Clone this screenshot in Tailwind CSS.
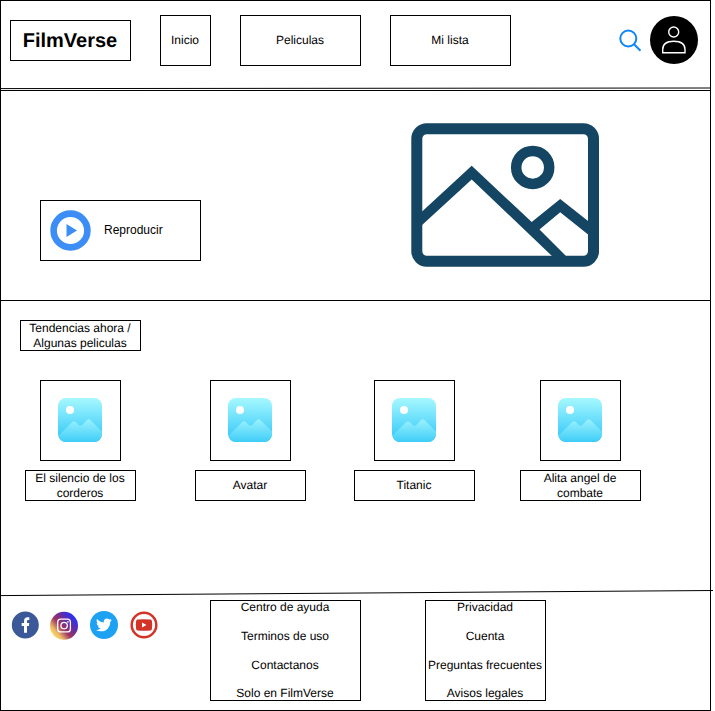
<!DOCTYPE html>
<html lang="es">
<head>
<meta charset="utf-8">
<title>FilmVerse</title>
<script src="https://cdn.jsdelivr.net/npm/@tailwindcss/browser@4"></script>
</head>
<body class="bg-white text-black overflow-hidden font-['Liberation_Sans',Arial,sans-serif] text-[12px] leading-[14.4px] [text-rendering:geometricPrecision]">
<svg class="absolute size-0" aria-hidden="true">
  <defs>
    <linearGradient id="sky" x1="0" y1="0" x2="0" y2="1"><stop offset="0" stop-color="#a6f8ff"/><stop offset=".8" stop-color="#45cff9"/><stop offset="1" stop-color="#3acaf8"/></linearGradient>
    <linearGradient id="hill" x1="0" y1="0" x2="0" y2="1"><stop offset="0" stop-color="#9cf2ff"/><stop offset="1" stop-color="#3ecdf8"/></linearGradient>
    <linearGradient id="ig" x1=".05" y1=".85" x2=".85" y2=".15"><stop offset="0" stop-color="#ffe45c"/><stop offset=".2" stop-color="#eebb68"/><stop offset=".45" stop-color="#9c3560"/><stop offset=".7" stop-color="#6a2c9c"/><stop offset=".9" stop-color="#3a2fe0"/><stop offset="1" stop-color="#2f30f0"/></linearGradient>
    <symbol id="photo" viewBox="0 0 44 44">
      <rect width="44" height="44" rx="8" fill="url(#sky)"/>
      <circle cx="12" cy="12" r="4" fill="#fff"/>
      <path d="M.7 37.5 14 24.200q2-2 4 0l2.700 2.700q1.800 1.600 3.600 0l4.500-4.700q1.900-1.900 3.800 0L44 33.400V36a8 8 0 0 1-8 8H8Q2 43.500.7 37.500Z" fill="url(#hill)"/>
    </symbol>
  </defs>
</svg>
<main class="relative flex h-[711px] w-[711px] flex-col border border-black">
  <header class="flex h-[89px] shrink-0 items-start pl-[9px]">
    <h1 class="mt-[19px] flex h-[41px] w-[121px] items-center justify-center border border-black pt-px pr-px text-[20px] leading-6 font-bold">FilmVerse</h1>
    <nav class="mt-[14px] ml-[29px] flex gap-[29px]">
      <a class="flex h-[51px] w-[51px] items-center justify-center border border-black pr-px">Inicio</a>
      <a class="flex h-[51px] w-[121px] items-center justify-center border border-black pr-px">Peliculas</a>
      <a class="flex h-[51px] w-[121px] items-center justify-center border border-black pr-px">Mi lista</a>
    </nav>
    <svg class="mt-[28px] ml-[107px] size-6 shrink-0" viewBox="0 0 24 24" fill="none" stroke="#0d87f5" stroke-width="2"><circle cx="10.300" cy="9.500" r="8"/><path d="M16 15.200 22.500 21.700"/></svg>
    <svg class="mt-[15px] ml-[8px] size-12 shrink-0" viewBox="0 0 48 48"><circle cx="24" cy="24" r="24"/><g fill="none" stroke="#fff" stroke-width="1.400"><circle cx="23.700" cy="16" r="5"/><path d="M12.700 36.800V33.500C12.700 28 17 25.300 23.800 25.300S35 28 35 33.500V36.800Z"/></g></svg>
  </header>
  <section class="flex h-[210px] shrink-0 items-start border-t border-black">
    <button class="mt-[109px] ml-[39px] flex h-[61px] w-[161px] items-center border border-black pl-[9px]">
      <svg class="size-[41px]" viewBox="0 0 41 41"><circle cx="20.500" cy="20.500" r="16.900" fill="none" stroke="#3c8df5" stroke-width="6.600"/><path d="M16.500 14 27 20.500 16.500 27Z" fill="#3c8df5"/></svg>
      <span class="ml-[13px]">Reproducir</span>
    </button>
    <svg class="mt-[29px] ml-[208px] h-[150px] w-[192px]" viewBox="409 120 192 150"><rect x="416.800" y="128.800" width="176.700" height="132.500" rx="10" fill="none" stroke="#144562" stroke-width="11"/><circle cx="532.700" cy="167.400" r="16.500" fill="none" stroke="#144562" stroke-width="10.500"/><path d="M421 212.400 471.700 165.800 531.700 222 560.200 199 589 221.800V235.200L560.200 212.300 539.500 229.500 567 257H553L471.700 179.500 421 226Z" fill="#144562"/></svg>
  </section>
  <section class="h-[294px] shrink-0 border-t border-black">
    <h2 class="mt-[19px] ml-[19px] flex h-[31px] w-[121px] items-center justify-center border border-black pr-px text-center">Tendencias ahora /<br>Algunas peliculas</h2>
    <div class="mt-[29px] flex pl-[24px]">
      <article class="flex w-[111px] flex-col items-center gap-[9px]">
        <div class="flex size-[81px] items-center justify-center border border-black"><svg class="mr-px mb-px size-11"><use href="#photo"/></svg></div>
        <p class="flex h-[31px] w-full items-center justify-center border border-black pr-px text-center">El silencio de los<br>corderos</p>
      </article>
      <article class="ml-[59px] flex w-[111px] flex-col items-center gap-[9px]">
        <div class="flex size-[81px] items-center justify-center border border-black"><svg class="mr-px mb-px size-11"><use href="#photo"/></svg></div>
        <p class="flex h-[31px] w-full items-center justify-center border border-black pr-px">Avatar</p>
      </article>
      <article class="ml-[48px] flex w-[121px] flex-col items-center gap-[9px]">
        <div class="flex size-[81px] items-center justify-center border border-black"><svg class="mr-px mb-px size-11"><use href="#photo"/></svg></div>
        <p class="flex h-[31px] w-full items-center justify-center border border-black pr-px">Titanic</p>
      </article>
      <article class="ml-[45px] flex w-[121px] flex-col items-center gap-[9px]">
        <div class="flex size-[81px] items-center justify-center border border-black"><svg class="mr-px mb-px size-11"><use href="#photo"/></svg></div>
        <p class="flex h-[31px] w-full items-center justify-center border border-black pr-px text-center">Alita angel de<br>combate</p>
      </article>
    </div>
  </section>
  <footer class="flex items-start pt-[6px]">
    <div class="mt-[10px] ml-[10px] flex w-[199px] shrink-0 gap-[10px]">
      <svg class="-mr-px size-[29px]" viewBox="11 610.500 29 29"><circle cx="25.300" cy="625.500" r="13.500" fill="#3b5998"/><path d="M24 633.300V626.500H21.700V623.600H24V621.500Q24 617.700 27.800 617.700H29.300V620.500H28Q27 620.500 27 621.600V623.600H29.300L28.900 626.500H27V633.300Z" fill="#fff"/></svg>
      <svg class="size-[30px]" viewBox="0 0 30 30"><circle cx="15" cy="15.800" r="14" fill="url(#ig)"/><g fill="none" stroke="#fff" stroke-width="1.300"><rect x="8.700" y="9.200" width="12.700" height="12.700" rx="3"/><circle cx="15.100" cy="15.600" r="3.200"/></g><circle cx="18.900" cy="11.900" r=".8" fill="#fff"/></svg>
      <svg class="size-[30px]" viewBox="0 0 30 30"><circle cx="15" cy="15" r="14" fill="#1da1f2"/><path transform="translate(7 7) scale(.66)" fill="#fff" d="M23.950 4.570a10 10 0 0 1-2.820.77 4.960 4.960 0 0 0 2.160-2.720 9.900 9.900 0 0 1-3.120 1.180 4.920 4.920 0 0 0-8.380 4.480C7.690 8.090 4.070 6.130 1.640 3.160a4.820 4.820 0 0 0-.67 2.480c0 1.710.87 3.210 2.190 4.100a4.900 4.900 0 0 1-2.230-.62v.06a4.920 4.920 0 0 0 3.950 4.830 5 5 0 0 1-2.210.08 4.940 4.940 0 0 0 4.600 3.420A9.870 9.870 0 0 1 0 19.540a14 14 0 0 0 7.550 2.210c9.050 0 14-7.500 14-13.980l-.02-.64a9.900 9.900 0 0 0 2.420-2.560Z"/></svg>
      <svg class="size-[30px]" viewBox="0 0 30 30"><circle cx="15" cy="15" r="12.300" fill="none" stroke="#d33428" stroke-width="2.500"/><path transform="translate(0 .5)" d="M8.500 9Q15 8.400 21.500 9Q22.700 9.200 22.900 10.500Q23.500 14.500 22.900 18.500Q22.700 19.800 21.500 20Q15 20.600 8.500 20Q7.300 19.800 7.100 18.500Q6.500 14.500 7.100 10.500Q7.300 9.200 8.500 9Z" fill="#d33428"/><path d="M13 12.400 17.500 15 13 17.600Z" fill="#fff"/></svg>
    </div>
    <div class="flex h-[101px] w-[151px] flex-col items-center justify-center gap-[14.2px] border border-black pr-px whitespace-nowrap">
      <a>Centro de ayuda</a><a>Terminos de uso</a><a>Contactanos</a><a>Solo en FilmVerse</a>
    </div>
    <div class="ml-[64px] flex h-[101px] w-[121px] flex-col items-center justify-center gap-[14.2px] border border-black pr-px whitespace-nowrap">
      <a>Privacidad</a><a>Cuenta</a><a>Preguntas frecuentes</a><a>Avisos legales</a>
    </div>
  </footer>
  <svg class="pointer-events-none absolute -top-px -left-px h-[711px] w-[715px]" viewBox="0 0 715 711" stroke="#000" fill="none"><path d="M0 88.600 711 88M0 595.600 713 590.500"/></svg>
</main>
</body>
</html>
